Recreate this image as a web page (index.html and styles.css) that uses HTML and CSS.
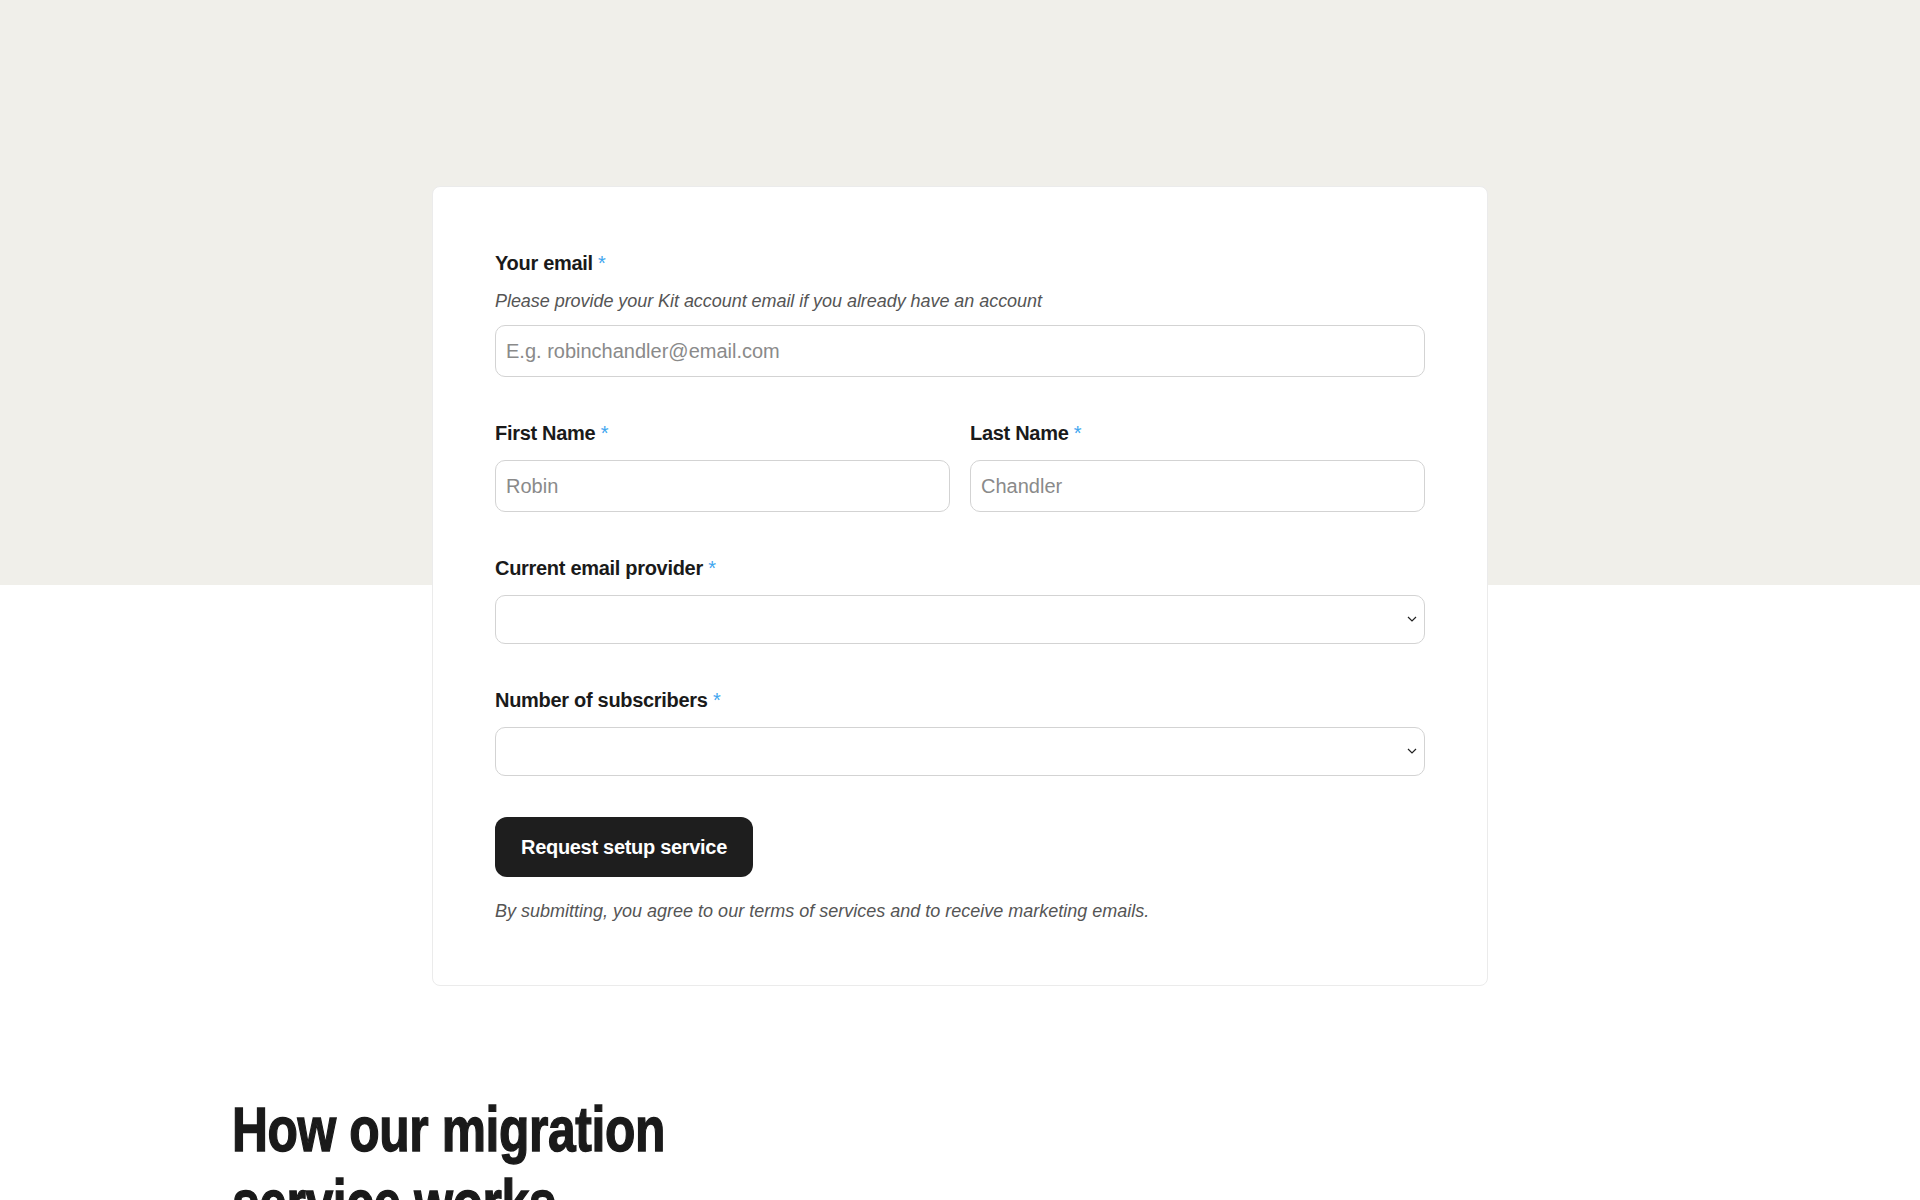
FILE: index.html
```html
<!DOCTYPE html>
<html lang="en">
<head>
    <meta charset="utf-8">
    <meta content="width=device-width, initial-scale=1" name="viewport">
    <title>Kit migration service</title>
    <link rel="stylesheet" href="styles.css">
</head>
<body>
<section class="signup">
    <form class="card">
        <div class="field">
            <label class="label" for="email">Your email <span class="req">*</span></label>
            <p class="hint">Please provide your Kit account email if you already have an account</p>
            <input class="input" id="email" type="email" placeholder="E.g. robinchandler@email.com">
        </div>

        <div class="field row">
            <div>
                <label class="label" for="first_name">First Name <span class="req">*</span></label>
                <input class="input" id="first_name" type="text" placeholder="Robin">
            </div>
            <div>
                <label class="label" for="last_name">Last Name <span class="req">*</span></label>
                <input class="input" id="last_name" type="text" placeholder="Chandler">
            </div>
        </div>

        <div class="field">
            <label class="label" for="provider">Current email provider <span class="req">*</span></label>
            <div class="select-wrap">
                <select class="select" id="provider">
                    <option value=""></option>
                </select>
                <svg class="chevron" width="10" height="6" viewBox="0 0 10 6"><path d="M1 1l4 4 4-4" fill="none" stroke="#222" stroke-width="1.2"/></svg>
            </div>
        </div>

        <div class="field">
            <label class="label" for="subscribers">Number of subscribers <span class="req">*</span></label>
            <div class="select-wrap">
                <select class="select" id="subscribers">
                    <option value=""></option>
                </select>
                <svg class="chevron" width="10" height="6" viewBox="0 0 10 6"><path d="M1 1l4 4 4-4" fill="none" stroke="#222" stroke-width="1.2"/></svg>
            </div>
        </div>

        <button class="submit" type="button">Request setup service</button>
        <p class="terms">By submitting, you agree to our terms of services and to receive marketing emails.</p>
    </form>
</section>

<section class="how">
    <h2>How our migration<br>service works</h2>
</section>
</body>
</html>
```

FILE: styles.css
```css
body {
    margin: 0;
    font-family: "Liberation Sans", Arial, sans-serif;
    color: #1a1a1a;
    background: #fff;
}

.signup {
    background: linear-gradient(#f0efea 0, #f0efea 585px, #fff 585px);
    padding-top: 186px;
}

.card {
    box-sizing: border-box;
    width: 1056px;
    margin: 0 auto;
    padding: 62px 62px 62px;
    background: #fff;
    border: 1px solid #ebebeb;
    border-radius: 8px;
}

.field {
    margin-bottom: 42px;
}

.row {
    display: grid;
    grid-template-columns: 1fr 1fr;
    gap: 20px;
}

.label {
    display: block;
    font-size: 20px;
    line-height: 28px;
    font-weight: 600;
    letter-spacing: -0.3px;
    margin-bottom: 13px;
}

.req {
    color: #3fa6ef;
    font-weight: 400;
}

.hint {
    margin: -1px 0 12px;
    font-size: 18px;
    line-height: 24px;
    font-style: italic;
    color: #555;
    letter-spacing: -0.05px;
}

.input,
.select {
    box-sizing: border-box;
    width: 100%;
    display: block;
    border: 1px solid #d3d3d3;
    border-radius: 10px;
    background: #fff;
    font-family: inherit;
    font-size: 20px;
    color: #1a1a1a;
    outline: none;
}

.input {
    height: 52px;
    padding: 0 10px;
}

.input::placeholder {
    color: #8a8a8a;
}

.select-wrap {
    position: relative;
}

.select {
    height: 49px;
    padding: 0 10px;
    appearance: none;
    -webkit-appearance: none;
}

.chevron {
    position: absolute;
    right: 8px;
    top: 21px;
    pointer-events: none;
}

.submit {
    display: block;
    height: 60px;
    padding: 0 26px;
    margin-top: 41px;
    border: none;
    border-radius: 12px;
    background: #1e1e1e;
    color: #fff;
    font-family: inherit;
    font-size: 20px;
    font-weight: 600;
    letter-spacing: -0.3px;
    cursor: pointer;
}

.field:nth-last-of-type(1) {
    margin-bottom: 0;
}

.terms {
    margin: 22px 0 0;
    font-size: 18px;
    line-height: 24px;
    font-style: italic;
    color: #555;
}

.how {
    padding: 107px 232px 80px;
}

/* no condensed face installed, so squeeze the bold one */
.how h2 {
    display: inline-block;
    margin: 0;
    font-family: "Liberation Sans", Arial, sans-serif;
    font-size: 63px;
    line-height: 73px;
    font-weight: 700;
    letter-spacing: -0.5px;
    color: #1a1a1a;
    -webkit-text-stroke: 1.4px #1a1a1a;
    transform: scaleX(0.79);
    transform-origin: left top;
}
```
